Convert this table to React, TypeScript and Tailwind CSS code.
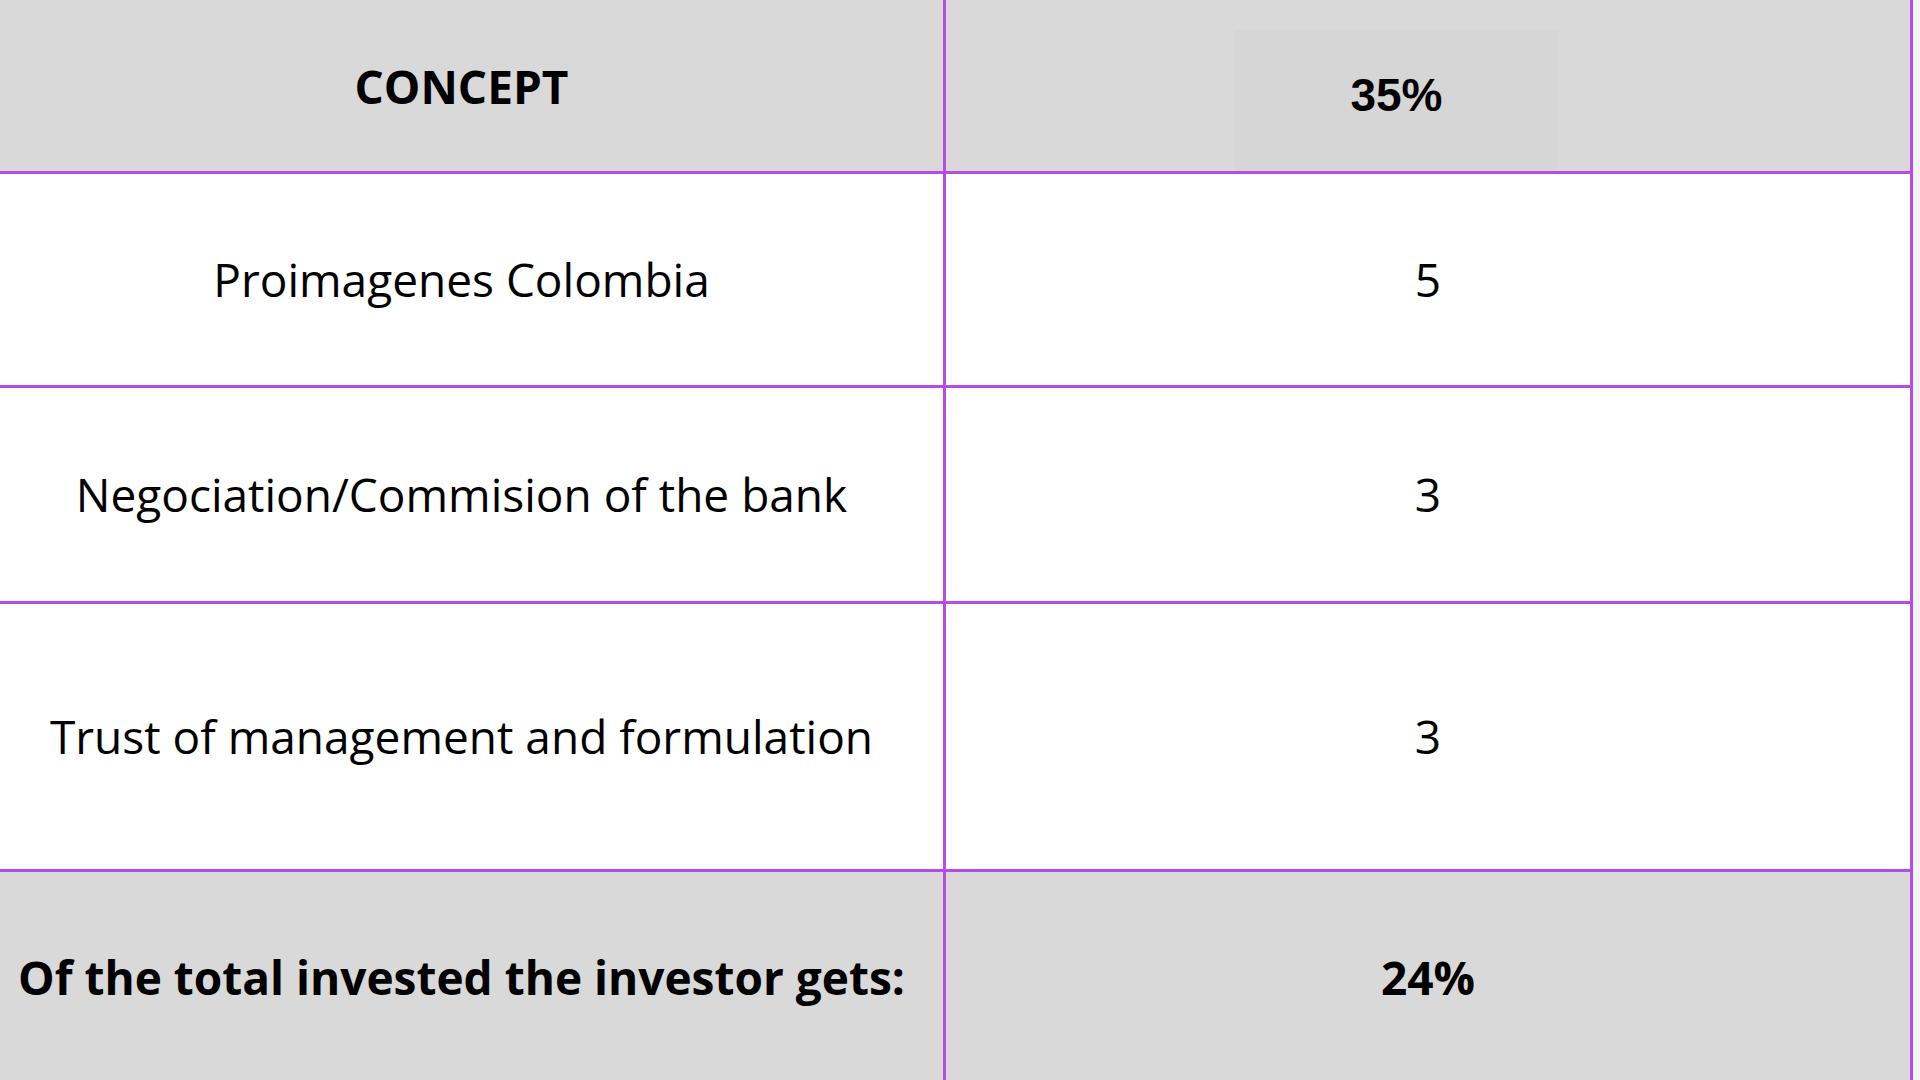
import React from "react";

const rows = [
  { label: "Proimagenes Colombia", value: "5", h: "h-[214px]" },
  { label: "Negociation/Commision of the bank", value: "3", h: "h-[216px]" },
  { label: "Trust of management and formulation", value: "3", h: "h-[268px]" },
];

export default function App() {
  return (
    <div className="w-[1920px] h-[1080px] bg-[#f4f4f4] overflow-hidden text-black font-['Open_Sans',sans-serif]">
      <div className="w-[1913px] flex flex-col">
        <div className="flex h-[174px] bg-[#d9d9d9] border-b-[3px] border-[#b64be6]">
          <div className="w-[946px] border-r-[3px] border-[#b64be6] flex items-center justify-center pr-[20px]">
            <span className="text-[46px] font-bold pt-[1px]">CONCEPT</span>
          </div>
          <div className="w-[967px] border-r-[3px] border-[#b64be6] pt-[30px] pl-[289px]">
            <div className="w-[323px] h-[141px] bg-[#d6d6d6] flex items-center justify-center">
              <span className="text-[46px] font-bold font-['Liberation_Sans',Arial,sans-serif] mt-[-10px]">35%</span>
            </div>
          </div>
        </div>
        {rows.map((r) => (
          <div key={r.label} className={`flex ${r.h} bg-white border-b-[3px] border-[#b64be6]`}>
            <div className="w-[946px] border-r-[3px] border-[#b64be6] flex items-center justify-center pr-[20px]">
              <span className="text-[46px]">{r.label}</span>
            </div>
            <div className="w-[967px] border-r-[3px] border-[#b64be6] flex items-center justify-center">
              <span className="text-[46px]">{r.value}</span>
            </div>
          </div>
        ))}
        <div className="flex h-[208px] bg-[#d9d9d9]">
          <div className="w-[946px] border-r-[3px] border-[#b64be6] flex items-center justify-center pr-[20px]">
            <span className="text-[46px] font-bold pt-[2px]">Of the total invested the investor gets:</span>
          </div>
          <div className="w-[967px] border-r-[3px] border-[#b64be6] flex items-center justify-center">
            <span className="text-[46px] font-bold pt-[2px]">24%</span>
          </div>
        </div>
      </div>
    </div>
  );
}
